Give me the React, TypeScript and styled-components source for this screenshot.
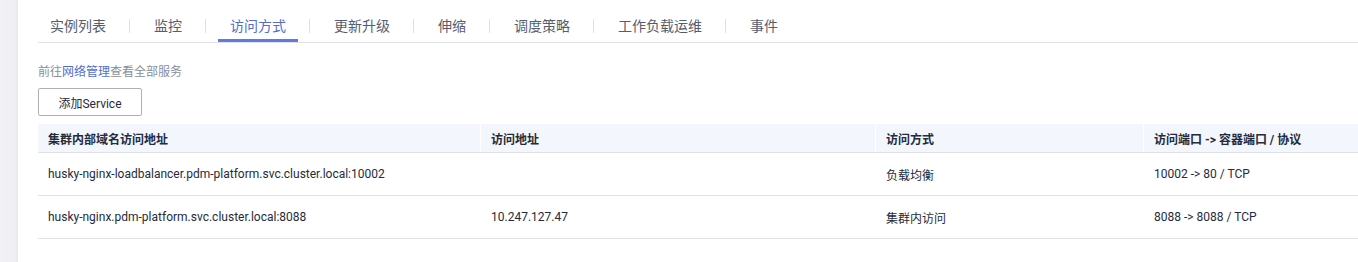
import styled, { createGlobalStyle, css } from 'styled-components'

const GlobalStyle = createGlobalStyle`
  html, body {
    margin: 0;
    padding: 0;
    background: #ffffff;
  }

  body {
    font-family: Roboto, "Noto Sans CJK SC", sans-serif;
    color: #252b3a;
    -webkit-font-smoothing: antialiased;
  }
`

const tabs = [
  '实例列表',
  '监控',
  '访问方式',
  '更新升级',
  '伸缩',
  '调度策略',
  '工作负载运维',
  '事件',
]

const columns = [
  '集群内部域名访问地址',
  '访问地址',
  '访问方式',
  '访问端口 -> 容器端口 / 协议',
]

const rows = [
  [
    'husky-nginx-loadbalancer.pdm-platform.svc.cluster.local:10002',
    '',
    '负载均衡',
    '10002 -> 80 / TCP',
  ],
  [
    'husky-nginx.pdm-platform.svc.cluster.local:8088',
    '10.247.127.47',
    '集群内访问',
    '8088 -> 8088 / TCP',
  ],
]

export default function App() {
  const active = '访问方式'

  return (
    <>
      <GlobalStyle />
      <Page>
        <Rail />
        <Main>
          <TabBar>
            {tabs.map((name, i) => (
              <TabGroup key={name}>
                {i > 0 && <TabDivider />}
                <Tab selected={name === active}>{name}</Tab>
              </TabGroup>
            ))}
          </TabBar>

          <Hint>
            前往<HintLink>网络管理</HintLink>查看全部服务
          </Hint>

          <AddButton>添加Service</AddButton>

          <Table>
            <HeadRow>
              {columns.map((title, i) => (
                <HeadCell key={title} first={i === 0}>
                  {title}
                </HeadCell>
              ))}
            </HeadRow>

            {rows.map(row => (
              <BodyRow key={row[0]}>
                {row.map((value, i) => (
                  <BodyCell key={i} first={i === 0}>
                    {value}
                  </BodyCell>
                ))}
              </BodyRow>
            ))}
          </Table>
        </Main>
      </Page>
    </>
  )
}

const Page = styled.div`
  display: flex;
  min-height: 262px;
`

const Rail = styled.div`
  width: 18px;
  flex-shrink: 0;
  background: linear-gradient(to right, #f2f2f6 0%, #eeeef3 85%, #e6e6ec 100%);
`

const Main = styled.div`
  flex: 1;
  min-width: 0;
  padding-left: 20px;
`

const TabBar = styled.div`
  display: flex;
  align-items: stretch;
  height: 42px;
  border-bottom: 1px solid #dfe1e6;
`

const TabGroup = styled.div`
  display: flex;
  align-items: stretch;
`

const TabDivider = styled.span`
  align-self: center;
  width: 1px;
  height: 14px;
  margin: 10px 12px 0 11px;
  background: #dfe1e6;
`

const Tab = styled.div<{ selected: boolean }>`
  position: relative;
  display: flex;
  align-items: center;
  padding: 10px 12px 0 12px;
  font-size: 14px;
  line-height: 20px;
  cursor: pointer;
  color: #575d6c;

  ${props =>
    props.selected &&
    css`
      color: #526ecc;

      &::after {
        content: '';
        position: absolute;
        left: 0;
        right: 0;
        bottom: 0;
        height: 3px;
        background: #5e7ce0;
      }
    `}
`

const Hint = styled.div`
  margin-top: 20px;
  font-size: 12px;
  line-height: 18px;
  color: #8a8e99;
`

const HintLink = styled.span`
  color: #526ecc;
  cursor: pointer;
`

const AddButton = styled.button`
  display: block;
  box-sizing: border-box;
  height: 28px;
  width: 104px;
  margin-top: 7px;
  padding: 0;
  font-family: inherit;
  font-size: 12px;
  color: #252b3a;
  background: #ffffff;
  border: 1px solid #adb0b8;
  border-radius: 2px;
  cursor: pointer;
`

const Table = styled.div`
  margin-top: 8px;
  font-size: 12px;
`

const gridColumns = css`
  display: grid;
  grid-template-columns: 442px 395px 268px 1fr;
`

const HeadRow = styled.div`
  ${gridColumns};
  height: 28px;
  background: #f3f6fc;
  border-bottom: 1px solid #dfe1e6;
`

const HeadCell = styled.div<{ first: boolean }>`
  display: flex;
  align-items: center;
  padding-left: 10px;
  font-weight: 700;
  color: #252b3a;
  border-left: ${props => (props.first ? 'none' : '1px solid #ffffff')};
`

const BodyRow = styled.div`
  ${gridColumns};
  height: 42px;
  border-bottom: 1px solid #dfe1e6;
`

const BodyCell = styled.div<{ first: boolean }>`
  display: flex;
  align-items: center;
  padding-left: ${props => (props.first ? '10px' : '11px')};
  color: #252b3a;
  white-space: nowrap;
`
